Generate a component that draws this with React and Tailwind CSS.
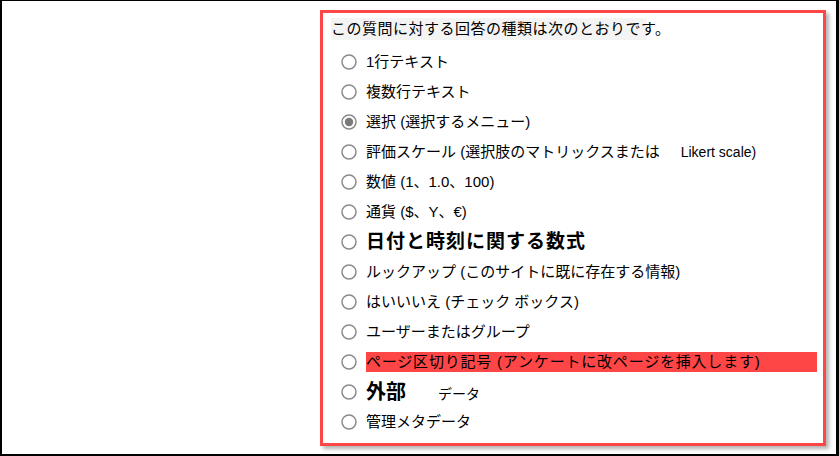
const FONT = { fontFamily: '"Liberation Sans", "Noto Sans CJK JP", sans-serif' };

function Radio({ checked }) {
  return (
    <svg width="16" height="16" viewBox="0 0 16 16" className="shrink-0">
      <circle cx="8" cy="8" r="7" fill="white" stroke="#8a8a8a" strokeWidth="1.5" />
      {checked && <circle cx="8" cy="8" r="4.2" fill="#7a7a7a" />}
    </svg>
  );
}

const rows = [
  { label: <span className="text-[15px]">1行テキスト</span> },
  { label: <span className="text-[15px]">複数行テキスト</span> },
  { label: <span className="text-[15px]">選択 (選択するメニュー)</span>, checked: true },
  {
    label: (
      <span className="text-[15px]">
        評価スケール (選択肢のマトリックスまたは
        <span className="ml-[21px] text-[14px]">Likert scale)</span>
      </span>
    ),
  },
  { label: <span className="text-[15px]">数値 (1、1.0、100)</span> },
  { label: <span className="text-[15px]">通貨 ($、Y、€)</span> },
  { label: <span className="text-[19px] font-bold tracking-[1px]">日付と時刻に関する数式</span> },
  { label: <span className="text-[15px]">ルックアップ (このサイトに既に存在する情報)</span> },
  { label: <span className="text-[15px]">はいいいえ (チェック ボックス)</span> },
  { label: <span className="text-[15px]">ユーザーまたはグループ</span> },
  {
    label: (
      <span className="block w-[451px] h-[20px] leading-[20px] bg-[#fe4646] text-[15px] tracking-[0.8px]">
        ページ区切り記号 (アンケートに改ページを挿入します)
      </span>
    ),
  },
  {
    label: (
      <span className="flex items-baseline">
        <span className="text-[20px] font-bold">外部</span>
        <span className="ml-[32px] text-[14px]">データ</span>
      </span>
    ),
  },
  { label: <span className="text-[15px]">管理メタデータ</span> },
];

export default function App() {
  return (
    <div
      className="w-[839px] h-[456px] bg-white border-l-2 border-t border-r-[3px] border-b-2 border-black overflow-hidden"
      style={FONT}
    >
      <div className="ml-[318px] mt-[9px] w-[506px] h-[436px] border-[3px] border-[#fe4646] bg-white shadow-[3px_3px_4px_rgba(0,0,0,0.3)] text-black">
        <div className="h-[32px] pl-[8px] flex items-center">
          <span className="block w-[316px] h-[22px] leading-[22px] bg-[#f4f4f4] whitespace-nowrap text-[15px] tracking-[0.5px]">
            この質問に対する回答の種類は次のとおりです。
          </span>
        </div>
        <ul className="mt-[2px]">
          {rows.map((r, i) => (
            <li key={i} className="h-[30px] flex items-center pl-[18px] gap-[9px] whitespace-nowrap">
              <Radio checked={r.checked} />
              {r.label}
            </li>
          ))}
        </ul>
      </div>
    </div>
  );
}
